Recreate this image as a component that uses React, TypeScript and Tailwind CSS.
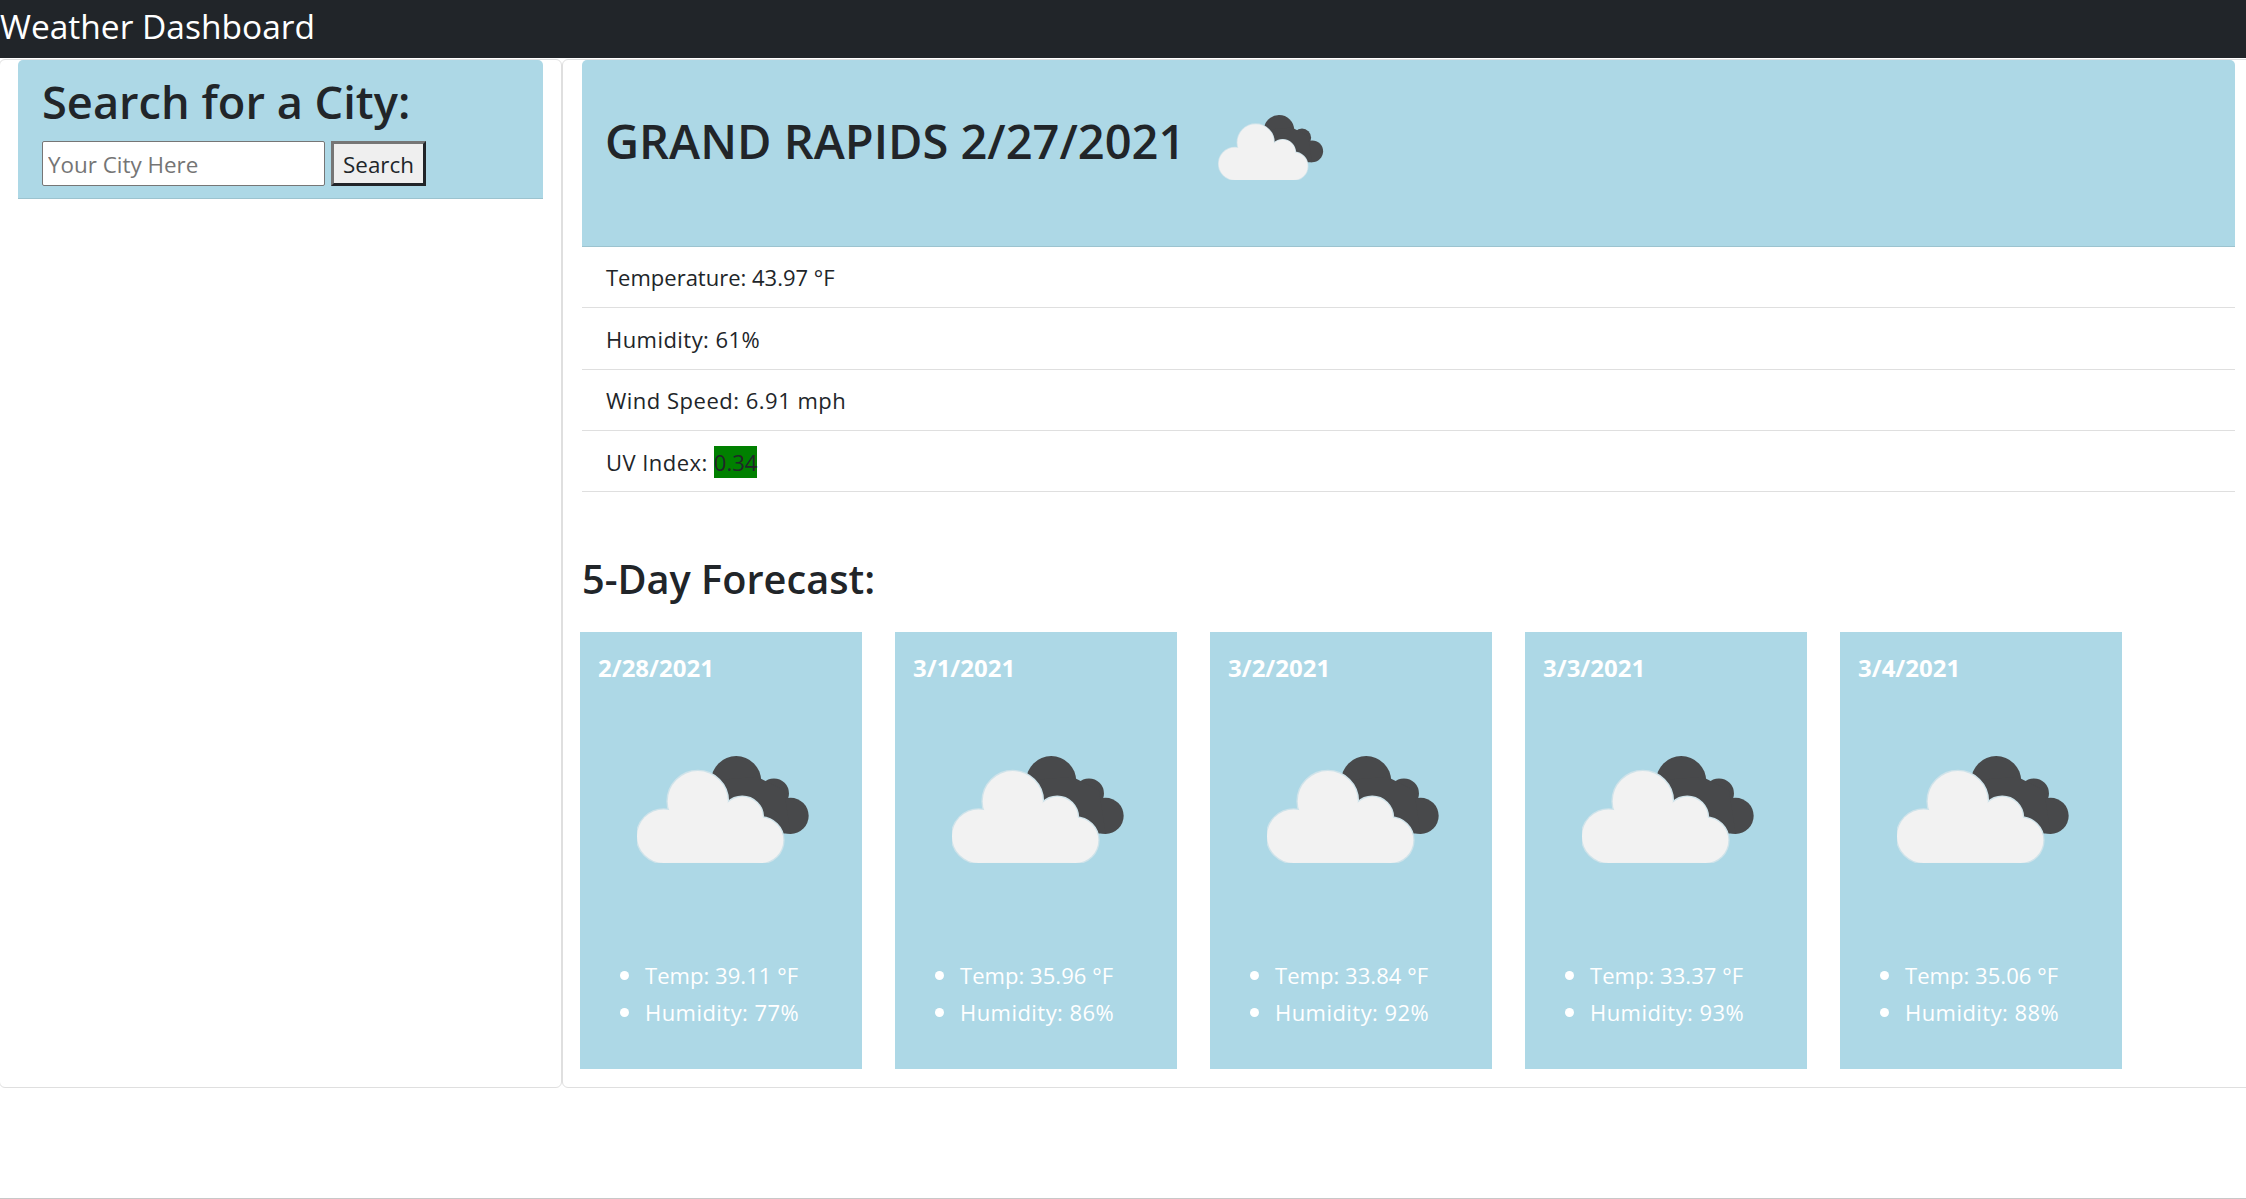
const F = "font-['Open_Sans','Liberation_Sans',sans-serif]";

function Cloud({ className }: { className: string }) {
  const white = (
    <>
      <circle cx="382" cy="543" r="90" />
      <circle cx="280" cy="648" r="80" />
      <circle cx="570" cy="660" r="68" />
      <circle cx="515" cy="592" r="62" />
      <rect x="280" y="580" width="290" height="148" />
    </>
  );
  return (
    <svg viewBox="200 408 515 320" className={className}>
      <g fill="#48494b">
        <circle cx="497" cy="483" r="75" />
        <circle cx="610" cy="520" r="45" />
        <circle cx="660" cy="587" r="54" />
        <polygon points="440,480 560,470 640,510 660,640 500,640" />
      </g>
      <g fill="#cfe3ea" stroke="#cfe3ea" strokeWidth="8">{white}</g>
      <g fill="#f2f2f2">{white}</g>
    </svg>
  );
}

const days = [
  ["2/28/2021", "39.11", "77"],
  ["3/1/2021", "35.96", "86"],
  ["3/2/2021", "33.84", "92"],
  ["3/3/2021", "33.37", "93"],
  ["3/4/2021", "35.06", "88"],
];

export default function App() {
  return (
    <div className={`${F} h-[1199px] bg-white text-[#212529] overflow-hidden border-b border-[#c8c8c8]`}>
      <nav className="h-[58px] bg-[#212529] text-white text-[33.5px] leading-[52px]">Weather Dashboard</nav>
      <div className="flex h-[1030px] pt-px">
        <div className="w-[563px] -ml-px shrink-0 border border-[#dfdfdf] rounded-[6px] px-[18px]">
          <div className="h-[139px] bg-[#add8e6] border-b border-[#9cc3cf] rounded-t-[5px] px-[24px] pt-[12px]">
            <h2 className="text-[45.2px] leading-[60px] font-semibold">Search for a City:</h2>
            <div className="flex gap-[6px] mt-[9px]">
              <input
                placeholder="Your City Here"
                className="w-[283px] h-[45px] bg-white border border-[#767676] rounded-[2px] pl-[5px] pt-[2px] text-[22.4px] placeholder:text-[#757575] outline-none"
              />
              <button className="w-[95px] h-[45px] bg-[#efefef] border-[3px] border-t-[#767676] border-l-[#767676] border-r-[#212529] border-b-[#212529] text-[22.4px] leading-none pt-[3px]">
                Search
              </button>
            </div>
          </div>
        </div>
        <div className="flex-1 -mr-[11px] border border-[#dfdfdf] rounded-[6px] pl-[19px] pr-[21px]">
          <div className="h-[187px] bg-[#add8e6] border-b border-[#9cc3cf] rounded-t-[5px] pl-[23px] flex items-start">
            <h2 className="text-[47px] leading-[60px] font-semibold mt-[51px] whitespace-nowrap">GRAND RAPIDS 2/27/2021</h2>
            <Cloud className="w-[106px] h-[65px] ml-[33px] mt-[55px]" />
          </div>
          <ul>
            <li className="h-[61.3px] border-b border-[#dfdfdf] pl-[24px] text-[22px] leading-[61px]">Temperature: 43.97 °F</li>
            <li className="h-[61.3px] border-b border-[#dfdfdf] pl-[24px] text-[22px] leading-[62px] tracking-[0.45px]">Humidity: 61%</li>
            <li className="h-[61.3px] border-b border-[#dfdfdf] pl-[24px] text-[22px] leading-[61px] tracking-[0.5px]">Wind Speed: 6.91 mph</li>
            <li className="h-[61.3px] border-b border-[#dfdfdf] pl-[24px] pt-[1px] text-[22px] leading-[62px] flex items-center">
              <span className="tracking-[0.45px]">UV Index:&nbsp;</span>
              <span className="bg-[#008000] leading-[32px]">0.34</span>
            </li>
          </ul>
          <h3 className="text-[39.7px] leading-[60px] font-semibold mt-[57px]">5-Day Forecast:</h3>
          <div className="flex gap-[33.5px] -ml-[2px] mt-[23px]">
            {days.map(([d, t, h]) => (
              <div key={d} className="w-[281.5px] h-[437px] bg-[#add8e6] text-white pt-[21px]">
                <div className="pl-[18px] text-[24px] leading-[30px] font-bold">{d}</div>
                <Cloud className="w-[172px] h-[107px] ml-[57px] mt-[73px]" />
                <ul className="mt-[93px] pl-[65px] list-disc text-[22px] leading-[36px] marker:text-[26px]">
                  <li><span className="text-[22px] tracking-[0.05px]">Temp: {t} °F</span></li>
                  <li><span className="text-[22px] tracking-[0.45px]">Humidity: {h}%</span></li>
                </ul>
              </div>
            ))}
          </div>
        </div>
      </div>
    </div>
  );
}
